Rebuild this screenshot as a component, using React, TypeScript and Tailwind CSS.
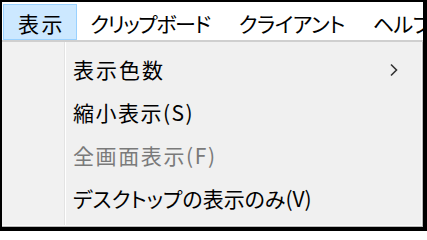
const menus = [
  { label: "表示", cls: "tracking-[2.5px] pl-[14px] pr-[11px]" },
  { label: "クリップボード", cls: "tracking-[-1.4px] pl-[13px] pr-[15px]" },
  { label: "クライアント", cls: "tracking-[-0.5px] pl-[14px] pr-[14px]" },
  { label: "ヘルプ", cls: "tracking-[-0.5px] pl-[14px] pr-[14px]" },
];

const items = [
  { label: "表示色数", sub: true, track: "tracking-[2px]" },
  { label: "縮小表示(S)", track: "tracking-[1.5px]" },
  { label: "全画面表示(F)", disabled: true, track: "tracking-[1.6px]" },
  { label: "デスクトップの表示のみ(V)", track: "tracking-[0px]" },
];

function Chevron() {
  return (
    <svg className="w-[12px] h-[14px]" viewBox="0 0 12 14" fill="none">
      <path d="M3 1.5 L8.5 7 L3 12.5" stroke="#333" strokeWidth={1.6} />
    </svg>
  );
}

export default function App() {
  return (
    <div
      className="w-[427px] h-[231px] bg-black pt-[2px] pl-[2px] pr-[4px] pb-[4px] flex flex-col overflow-hidden [font-feature-settings:'palt'] text-black"
      style={{ fontFamily: '"Noto Sans CJK JP", "Noto Sans", sans-serif' }}
    >
      {/* menu bar */}
      <div className="h-[40px] bg-white border-b-2 border-[#cfcfcf] flex items-stretch pl-[1px] pt-[2px] whitespace-nowrap overflow-hidden">
        {menus.map((m, i) => (
          <div
            key={m.label}
            className={
              "flex items-center text-[21px] leading-none pt-[2px] shrink-0 " +
              m.cls +
              (i === 0 ? " bg-[#cce8ff] border border-[#99d1ff]" : "")
            }
          >
            {m.label}
          </div>
        ))}
      </div>

      {/* dropdown */}
      <div className="flex-1 flex bg-[#f0f0f0] border-r border-b border-[#b9b9b9]">
        <div className="flex-1 flex border-r border-b border-[#fbfbfb]">
          <div className="w-[63px] border-r border-[#e3e3e3] bg-[#f1f1f1]" />
          <div className="flex-1 flex flex-col pt-[6px] pl-[7px] border-l border-white">
            {items.map((it) => (
              <div
                key={it.label}
                className={
                  "h-[43px] flex items-center justify-between pr-[21px] text-[21px] leading-none " +
                  (it.disabled ? "text-[#7a7a7a]" : "text-black")
                }
              >
                <span className={it.track}>{it.label}</span>
                {it.sub && <Chevron />}
              </div>
            ))}
          </div>
        </div>
      </div>
    </div>
  );
}
